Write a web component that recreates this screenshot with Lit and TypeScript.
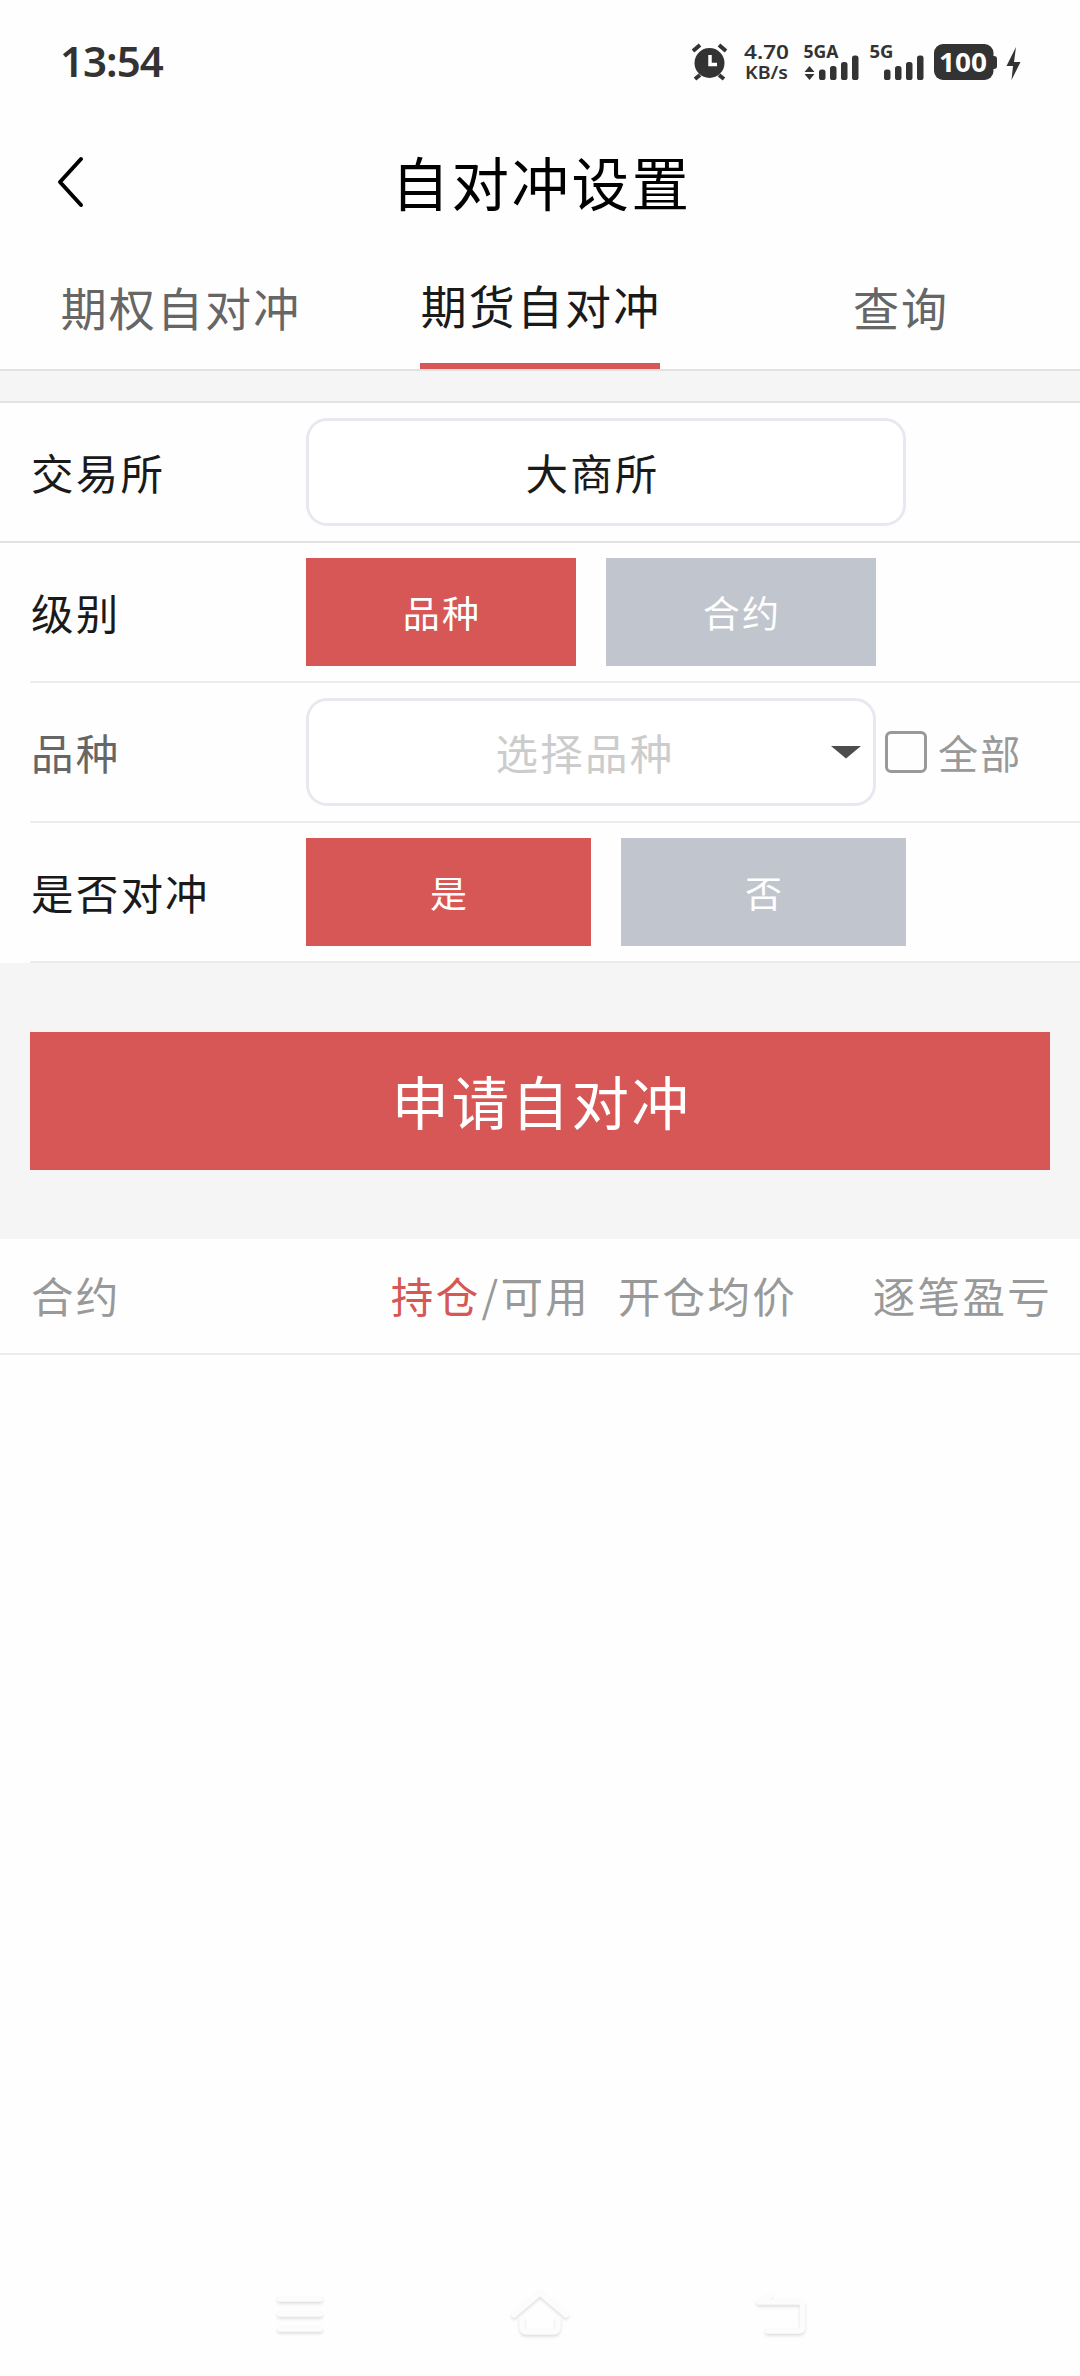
import { LitElement, html, css, svg } from "lit";
import { customElement, state } from "lit/decorators.js";

@customElement("status-bar")
class StatusBar extends LitElement {
  static styles = css`
    :host { display: block; height: 124px; color: #333; }
    .bar { height: 124px; display: flex; align-items: center; justify-content: space-between; box-sizing: border-box; padding: 0 49px 0 60px; }
    .time { font: 600 42px/50px "Noto Sans", sans-serif; letter-spacing: -1px; padding-bottom: 2px; }
    svg { display: block; }
    text { font-family: "Noto Sans", sans-serif; fill: #333; }
    .net { font-weight: 600; font-size: 20.500px; }
    .unit { font-weight: 600; font-size: 18px; }
    .gen { font-weight: 700; font-size: 18px; }
    .level { font-weight: 700; font-size: 27px; fill: #fff; }
  `;
  private bars(x: number) {
    return [10.5, 14, 18, 24.5].map((h, i) => svg`<rect x=${x + i * 11} y=${50 - h} width="6.5" height=${h} rx="2.6"/>`);
  }
  render() {
    return html`<div class="bar">
      <div class="time">13:54</div>
      <svg width="340" height="62" viewBox="0 1 340 62" fill="#333">
        <circle cx="18.500" cy="33" r="15"/>
        <path d="M2 21l7-6M35 21l-7-6M4 49l5-4M33 49l-5-4" stroke="#333" stroke-width="4" fill="none"/>
        <path d="M19 25v9.500h7" stroke="#fff" stroke-width="3.500" fill="none"/>
        <text class="net" x="53" y="29.300" textLength="45" lengthAdjust="spacingAndGlyphs">4.70</text>
        <text class="unit" x="54" y="49" textLength="43" lengthAdjust="spacingAndGlyphs">KB/s</text>
        <text class="gen" x="112.500" y="27.500" textLength="35" lengthAdjust="spacingAndGlyphs">5GA</text>
        <path d="M113.500 42l5-6 5 6zM113.500 44l5 6 5-6z"/>
        ${this.bars(128)}
        <text class="gen" x="178.500" y="27.500" textLength="24" lengthAdjust="spacingAndGlyphs">5G</text>
        ${this.bars(193)}
        <rect x="243" y="14" width="59.500" height="36" rx="9"/>
        <rect x="298" y="26" width="8" height="13" rx="3"/>
        <text class="level" x="248" y="41.700" textLength="48" lengthAdjust="spacingAndGlyphs">100</text>
        <path d="M325 17l-9.500 19h6.500l-1.500 14 9-18h-6.500z"/>
      </svg>
    </div>`;
  }
}

@customElement("nav-hints")
class NavHints extends LitElement {
  static styles = css`
    :host { display: block; }
    .nav { display: flex; justify-content: space-between; padding: 0 270px 3px; height: 120px; align-items: center; }
    svg { display: block; filter: drop-shadow(0 2px 1.500px rgba(0, 0, 0, 0.12)); }
    path { fill: none; stroke: #fcfcfc; stroke-width: 5.500; stroke-linecap: round; stroke-linejoin: round; }
  `;
  render() {
    return html`<div class="nav">
      <svg width="60" height="60"><path d="M10 16h40M10 31h40M10 46h40"/></svg>
      <svg width="60" height="60"><path d="M4 32l26-22 26 22M12 36v8q0 5 5 5h26q5 0 5-5v-8"/></svg>
      <svg width="60" height="60"><path d="M20 13L9 19h40q3.500 0 3.500 3.500v22q0 3.500-3.500 3.500H18"/></svg>
    </div>`;
  }
}

@customElement("app-root")
class AppRoot extends LitElement {
  static styles = css`
    :host { display: block; width: 1080px; height: 2376px; overflow: hidden; background: #fefefe; font-family: "Noto Sans CJK SC", sans-serif; color: #1a1a1a; white-space: nowrap; }
    .page { height: 2376px; display: flex; flex-direction: column; }
    .title-bar { height: 120px; display: grid; grid-template-columns: 120px 1fr 120px; align-items: center; }
    .back { display: block; margin: -4px 0 0 54px; }
    .title { color: #000; font-size: 57.500px; line-height: 80px; letter-spacing: 2.500px; text-align: center; padding: 0 0 7px 3px; }
    .tabs { height: 125px; display: grid; grid-template-columns: repeat(3, 1fr); border-bottom: 2px solid #e2e2e2; font-size: 46px; letter-spacing: 2.100px; color: #666; }
    .tab { display: flex; justify-content: center; align-items: center; box-sizing: border-box; padding: 0 0 2px 2px; }
    .active { width: 240px; justify-self: center; padding: 0 0 0 2px; border-bottom: 6px solid #d65755; color: #1a1a1a; }
    .gap { height: 30px; background: #f5f5f5; border-bottom: 2px solid #e2e2e2; }
    .row { height: 138px; display: flex; align-items: center; margin-left: 30px; border-bottom: 2px solid #ebebeb; font-size: 42.500px; letter-spacing: 2.200px; }
    .full { margin-left: 0; padding-left: 30px; border-color: #e2e2e2; }
    .label { width: 276px; flex: none; box-sizing: border-box; padding: 0 0 2px 1px; }
    .dim { color: #666; }
    .field { width: 600px; height: 108px; box-sizing: border-box; border: 3px solid #e7e8f0; border-radius: 21px; display: flex; justify-content: center; align-items: center; background: #fff; padding: 0 27px 2px 0; }
    .select { width: 570px; color: #ccc; position: relative; padding-right: 12px; }
    .caret { position: absolute; right: 12px; top: 45px; }
    .choices { display: flex; gap: 30px; font-size: 37px; color: #fff; }
    .choice { width: 270px; height: 108px; background: #c1c5cd; display: flex; justify-content: center; align-items: center; box-sizing: border-box; padding-left: 2px; }
    .wide .choice { width: 285px; }
    .choice.on { background: #d65755; }
    .box { width: 42px; height: 42px; box-sizing: border-box; border: 3px solid #999; border-radius: 6px; margin: 0 11px 0 9px; }
    .all { font-size: 40px; color: #999; }
    .action { background: #f5f5f5; padding: 69px 30px; }
    .submit { height: 138px; box-sizing: border-box; padding: 0 0 2px 3px; background: #d65755; color: #fff; display: flex; justify-content: center; align-items: center; font-size: 57.500px; letter-spacing: 2.500px; }
    .head { height: 111px; padding: 0 28px 3px 31px; border-bottom: 2px solid #ebebeb; display: grid; grid-template-columns: 276px 283px 207px 1fr; align-items: center; color: #999; font-size: 42.500px; letter-spacing: 2.300px; }
    .right { text-align: right; }
    .hot { color: #d65755; margin-right: 1px; }
    .rest { flex: 1; }
  `;
  @state() private level = "品种";
  @state() private hedge = "是";

  private choices(options: string[], current: string, pick: (o: string) => void) {
    return options.map(
      (o) => html`<div class="choice ${o === current ? "on" : ""}" @click=${() => pick(o)}>${o}</div>`
    );
  }

  render() {
    return html`<div class="page">
      <status-bar></status-bar>
      <div class="title-bar">
        <svg class="back" width="32" height="54"><path d="M27 4L6 27l21 23" fill="none" stroke="#000" stroke-width="4" stroke-linecap="round" stroke-linejoin="round"/></svg>
        <div class="title">自对冲设置</div>
      </div>
      <div class="tabs">
        <div class="tab">期权自对冲</div>
        <div class="tab active">期货自对冲</div>
        <div class="tab">查询</div>
      </div>
      <div class="gap"></div>
      <div class="row full"><div class="label">交易所</div><div class="field">大商所</div></div>
      <div class="row"><div class="label">级别</div>
        <div class="choices">${this.choices(["品种", "合约"], this.level, (o) => (this.level = o))}</div></div>
      <div class="row"><div class="label dim">品种</div>
        <div class="field select">选择品种<svg class="caret" width="30" height="14"><path d="M0 0h30L15 12.500z" fill="#4d4d4f"/></svg></div>
        <div class="box"></div><div class="all">全部</div></div>
      <div class="row"><div class="label">是否对冲</div>
        <div class="choices wide">${this.choices(["是", "否"], this.hedge, (o) => (this.hedge = o))}</div></div>
      <div class="action"><div class="submit">申请自对冲</div></div>
      <div class="head">
        <div>合约</div>
        <div class="right"><span class="hot">持仓</span>/可用</div>
        <div class="right">开仓均价</div>
        <div class="right">逐笔盈亏</div>
      </div>
      <div class="rest"></div>
      <nav-hints></nav-hints>
    </div>`;
  }
}
